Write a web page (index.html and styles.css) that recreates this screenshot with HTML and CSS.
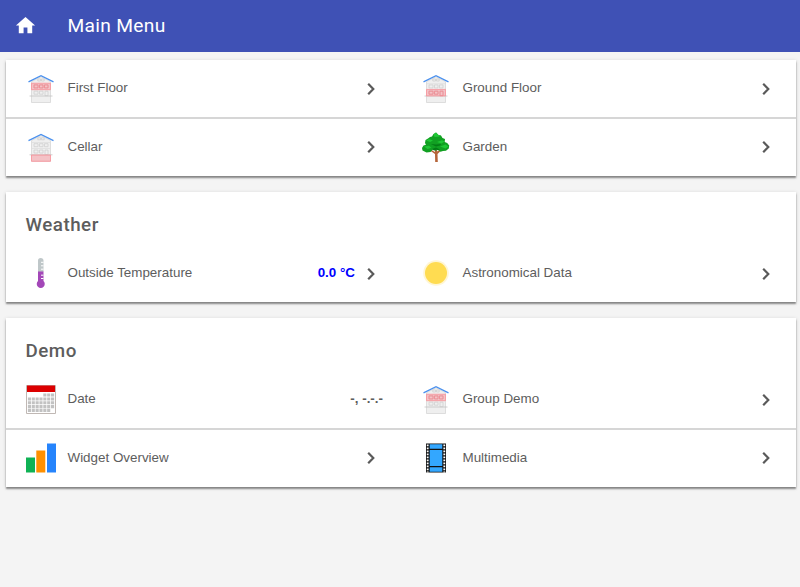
FILE: index.html
```
<!DOCTYPE html>
<html lang="en">
<head>
<meta charset="utf-8">
<title>Main Menu</title>
<link rel="stylesheet" href="styles.css">
</head>
<body>
<svg class="defs" width="0" height="0">
  <symbol id="house" viewBox="0 0 30 30">
    <path d="M5.500 7.500 15 2.500 24.500 7.500V28.300H5.500z" fill="#efefef" stroke="#d6d6d6" stroke-width=".8"/>
    <path d="M5.500 9.500h19M5.500 15.500h19" stroke="#ddd" stroke-width=".7"/>
    <path d="M11.800 4.800h2.700v2h-2.700zM15.500 4.800h2.700v2h-2.700z" fill="none" stroke="#ccc" stroke-width=".7"/>
    <path d="M8 10.700h4v3H8zM13.500 10.700H17v3h-3.500zM18.500 10.700h3.500v3h-3.500zM8 17h4v3H8zM13.500 17H17v3h-3.500zM19 17h3v4.500h-3z" fill="none" stroke="#d0d0d0" stroke-width=".8"/>
    <path d="M3.500 21.800h23" stroke="#c4c4c4" stroke-width=".8"/>
    <path d="M2.500 7.700 15 1.500 27.500 7.700" fill="none" stroke="#4a90ee" stroke-width="1.300"/>
  </symbol>
  <symbol id="arrow" viewBox="0 0 12 14">
    <path d="M3.200 1.700 8.300 7l-5.100 5.300" fill="none" stroke="#5a5a5a" stroke-width="2.200"/>
  </symbol>
</svg>
<header class="bar">
  <svg class="home" viewBox="0 0 24 24"><path d="M10 20v-6h4v6h5v-8h3L12 3 2 12h3v8z" fill="#fff"/></svg>
  <h1>Main Menu</h1>
</header>
<main>
  <section class="card">
    <div class="row">
      <div class="cell">
        <svg class="icon" viewBox="0 -1.200 30 30"><use href="#house" width="30" height="30"/><path class="floor" d="M5.500 9h19v6.500h-19z"/><path class="panes" d="M8 10.700h4v3H8zM13.500 10.700H17v3h-3.500zM18.500 10.700h3.500v3h-3.500z"/></svg>
        <span class="label">First Floor</span><svg class="arrow"><use href="#arrow"/></svg>
      </div>
      <div class="cell">
        <svg class="icon" viewBox="0 -1.200 30 30"><use href="#house" width="30" height="30"/><path class="floor" d="M5.500 15.200h19v6.500h-19z"/><path class="panes" d="M8 17h4v3H8zM13.500 17H17v3h-3.500zM19 17h3v4.500h-3z"/></svg>
        <span class="label">Ground Floor</span><svg class="arrow"><use href="#arrow"/></svg>
      </div>
    </div>
    <div class="row">
      <div class="cell">
        <svg class="icon" viewBox="0 -1 30 30"><use href="#house" width="30" height="30"/><path class="floor" d="M5.500 22h19v6.300h-19z"/></svg>
        <span class="label">Cellar</span><svg class="arrow"><use href="#arrow"/></svg>
      </div>
      <div class="cell">
        <svg class="icon" viewBox="0 0 30 30">
          <path d="M14.200 30 14 22 9 18.500l1-.8 4 2.300V15h2v4.500l4-2.500.7.9-4.200 4.100.3 8z" fill="#b5653a"/>
          <path d="M15 .5 17.500 3 20 3.500 21.500 6 24 7l-.3 3 2.500 1 2 2.500-.4 3-2.800 2.300-3 .2-2.500.8-2.500-2-2.500 1-2.500-1.300-2.500 2.500-4 .5-4-2L1 16l1.500-2.500L5 12.700 4 11l.5-3L7 6.500 9 5l2-.5L12.500 2z" fill="#11a022"/>
          <path d="M12.500 2.500 15 .5 17.500 3l2.500.5-2.500 1.200-4 .3zM5 8.500l3-1.500 4 1.500-3 1.500zM16 10l5-1.800 2.500 1.300-3 2zM3 14.500l5-.7 2.500 2-4 1.200zM19 14.500l5.500-2 3 2-3 2z" fill="#20c735"/>
          <path d="M10 12l5 .5 5-.5-1 1.500-4 1zM11 17l4-1.500 4 2-2 .7-1.500-.8-2.500 1z" fill="#047c16"/>
        </svg>
        <span class="label">Garden</span><svg class="arrow"><use href="#arrow"/></svg>
      </div>
    </div>
  </section>

  <section class="card">
    <h2>Weather</h2>
    <div class="row">
      <div class="cell">
        <svg class="icon" viewBox="0 0 30 30">
          <path d="M12 14V2.500Q12 0 14.700 0T17.500 2.500V14z" fill="#bfc7c9"/>
          <path d="M12 13.500h5.500V23a4 4 0 1 1-5.500 0z" fill="#a347b8"/>
          <path d="M15 4.300h2.500M15 7.800h2.500M15 11.200h2.500M15 17.200h2.500M15 20.500h2.500" stroke="#fff" stroke-width="1"/>
        </svg>
        <span class="label">Outside Temperature</span><b class="value temp">0.0 °C</b><svg class="arrow"><use href="#arrow"/></svg>
      </div>
      <div class="cell">
        <svg class="icon" viewBox="0 0 30 30"><circle cx="15" cy="15" r="12.800" fill="#fff6d5"/><circle cx="15" cy="15" r="11" fill="#ffdc51"/></svg>
        <span class="label">Astronomical Data</span><svg class="arrow"><use href="#arrow"/></svg>
      </div>
    </div>
  </section>

  <section class="card">
    <h2>Demo</h2>
    <div class="row">
      <div class="cell">
        <svg class="icon" viewBox="0 0 30 30">
          <path d="M.5 1.500h29v28H.5z" fill="#fff" stroke="#c0b8b4"/>
          <path d="M1 1.500h28V8H1z" fill="#dc0000"/>
          <g stroke="#c2c2c2" stroke-width="3.100" stroke-dasharray="3.100 .75">
            <path d="M17.300 11h11.600"/><path d="M1.900 15h27"/><path d="M1.900 18.800h27"/><path d="M1.900 22.600h27"/><path d="M1.900 26.400h22.500"/>
          </g>
        </svg>
        <span class="label">Date</span><b class="value">-, -.-.-</b>
      </div>
      <div class="cell">
        <svg class="icon" viewBox="0 -1.200 30 30"><use href="#house" width="30" height="30"/><path class="floor" d="M5.500 9h19v6.500h-19z"/><path class="panes" d="M8 10.700h4v3H8zM13.500 10.700H17v3h-3.500zM18.500 10.700h3.500v3h-3.500z"/></svg>
        <span class="label">Group Demo</span><svg class="arrow"><use href="#arrow"/></svg>
      </div>
    </div>
    <div class="row">
      <div class="cell">
        <svg class="icon" viewBox="0 0 30 30">
          <path d="M0 14.500h9v15H0z" fill="#0fb255"/><path d="M10.300 7.500h9v22h-9z" fill="#ff9000"/><path d="M21 .5h9v29h-9z" fill="#2684fc"/>
        </svg>
        <span class="label">Widget Overview</span><svg class="arrow"><use href="#arrow"/></svg>
      </div>
      <div class="cell">
        <svg class="icon" viewBox="0 .5 30 30">
          <path d="M5 1h20v29H5z" fill="#111"/>
          <path d="M8.700 1.800h12.600v4.400H8.700zM8.700 7.500h12.600v16H8.700zM8.700 24.800h12.600v4.400H8.700z" fill="#33a7ff"/>
          <path d="M6.700 2v28M23.300 2v28" stroke="#fff" stroke-width="1.800" stroke-dasharray="1.700 1.300"/>
        </svg>
        <span class="label">Multimedia</span><svg class="arrow"><use href="#arrow"/></svg>
      </div>
    </div>
  </section>
</main>
</body>
</html>
```
FILE: styles.css
```
* { box-sizing: border-box; }
html { background: #f4f4f4; }
body {
  margin: 0;
  min-height: 100vh;
  background: #f4f4f4;
  color: #5d5d5d;
  font: 13.4px "Liberation Sans", Arial, sans-serif;
}
.defs { position: absolute; }
.bar {
  display: flex;
  align-items: center;
  height: 52px;
  padding: 0 0 2px 14px;
  background: #3f51b5;
  color: #fff;
}
.home { width: 23px; height: 23px; }
h1 {
  margin: 0 0 0 30.5px;
  font: 400 19.2px Roboto, sans-serif;
  letter-spacing: .3px;
}
main {
  display: flex;
  flex-direction: column;
  gap: 16px;
  padding: 8px 4px 20px 6px;
}
.card {
  background: #fff;
  box-shadow: 0 2px 1.5px rgba(0, 0, 0, .38), 0 1px 4px rgba(0, 0, 0, .16);
}
h2 {
  height: 53px;
  margin: 0;
  padding: 7px 20px 0 19.5px;
  font: 500 18.8px/52px Roboto, sans-serif;
  letter-spacing: .5px;
}
.row { display: grid; grid-template-columns: 1fr 1fr; height: 57px; }
.row + .row { height: 59px; border-top: 2px solid #d6d6d6; }
.cell { display: flex; align-items: center; padding: 0 18px 1px 20px; }
.row + .row .cell { padding-bottom: 2px; }
.icon { width: 30px; height: 30px; margin-right: 11.5px; }
.label { flex: 1; line-height: 16px; }
.value { font-weight: 700; line-height: 16px; }
.temp { color: #00f; margin-right: 10px; }
.arrow { width: 12px; height: 14px; margin: 1px 6px 0 0; }
.floor { fill: #ff6f7b; fill-opacity: .35; stroke: #ff8b94; stroke-width: .7; }
.panes { fill: none; stroke: #f08a92; stroke-width: .8; }
```
